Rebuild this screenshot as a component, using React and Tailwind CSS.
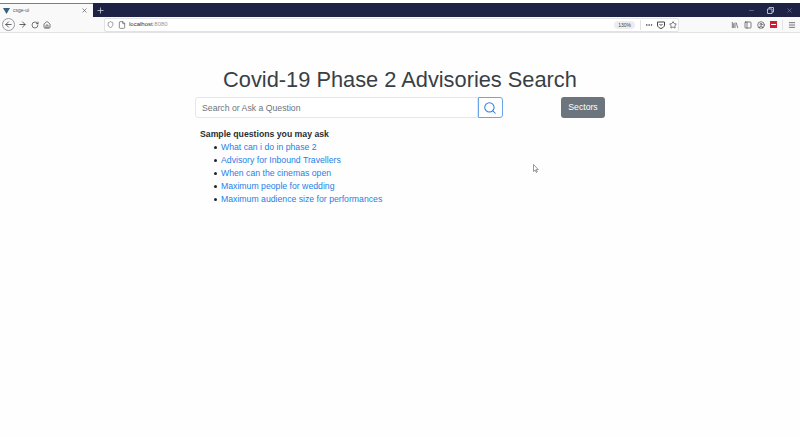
import { ArrowLeft, ArrowRight, RotateCw, Home, Shield, File, Star, Library, PanelLeft, CircleUser, Menu, X, Plus, Minus, Search, Ellipsis } from 'lucide-react';

const questions = [
  'What can i do in phase 2',
  'Advisory for Inbound Travellers',
  'When can the cinemas open',
  'Maximum people for wedding',
  'Maximum audience size for performances',
];

export default function App() {
  return (
    <div className="w-[800px] h-[437px] overflow-hidden bg-[#fefefe] relative font-['Liberation_Sans',sans-serif]">
      <div className="h-[3px] bg-white" />
      <div className="h-[14px] bg-[#1e2245] flex items-stretch">
        <div className="w-[93px] bg-[#f9f9fa] border-t border-[#3b8fe0] flex items-center pl-[3px] pr-[5px] gap-[3px]">
          <svg width="7" height="7" viewBox="0 0 8 8"><path d="M0 1h8L4 8z" fill="#35607f" /></svg>
          <span className="text-[5px] text-[#555] flex-1">csge-ui</span>
          <X size={7} color="#444" />
        </div>
        <div className="w-[14px] flex items-center justify-center">
          <Plus size={9} color="#d8d8e0" />
        </div>
        <div className="flex-1" />
        <div className="flex items-center gap-[12px] pr-[7px]">
          <Minus size={7} color="#8d8fa3" />
          <svg width="7" height="7" viewBox="0 0 7 7" fill="none" stroke="#b5b6c4"><path d="M.5 2h4.500v4.500H.5zM2 2V.5h4.500V5H5" /></svg>
          <X size={7} color="#8d8fa3" />
        </div>
      </div>
      <div className="h-[16px] bg-[#f9f9fa] border-b border-[#e4e4e6] flex items-center pl-[2px] pr-[4px]">
        <div className="w-[13px] h-[13px] rounded-full border border-[#9a9a9e] flex items-center justify-center">
          <ArrowLeft size={9} color="#333" />
        </div>
        <div className="flex items-center gap-[4px] ml-[3px]">
          <ArrowRight size={9} color="#333" />
          <RotateCw size={8} color="#333" />
          <Home size={8} color="#333" />
        </div>
        <div className="ml-[53px] w-[575px] h-[14px] bg-white border border-[#e2e2e4] rounded-[2px] flex items-center pl-[2px] pr-[1px]">
          <Shield size={7} color="#555" />
          <File size={8} color="#555" className="ml-[4px]" />
          <span className="text-[6px] text-[#333] ml-[3px] flex-1">localhost<span className="text-[#999]">:8080</span></span>
          <span className="text-[5px] text-[#444] bg-[#ededf0] rounded-full px-[4px] h-[8px] leading-[8px]">130%</span>
          <div className="w-px h-[10px] bg-[#e2e2e4] ml-[5px]" />
          <Ellipsis size={8} color="#333" className="ml-[4px]" />
          <svg width="8" height="8" viewBox="0 0 8 8" fill="none" stroke="#444" className="ml-[4px]"><path d="M.5 1h7v3c0 2-2 3-3.500 3.500C2.500 7 .5 6 .5 4z" /><path d="M2.500 3l1.500 1.500L5.500 3" /></svg>
          <Star size={8} color="#333" className="ml-[4px]" />
        </div>
        <div className="flex-1" />
        <div className="flex items-center gap-[5px]">
          <Library size={8} color="#444" />
          <PanelLeft size={8} color="#444" />
          <CircleUser size={8} color="#444" />
          <div className="w-[7px] h-[7px] bg-[#cc1f33] flex items-center justify-center">
            <div className="w-[5px] h-px bg-white" />
          </div>
          <div className="w-px h-[10px] bg-[#e2e2e4]" />
          <Menu size={8} color="#333" />
        </div>
      </div>

      <div className="flex flex-col items-center pt-[33px]">
        <h1 className="text-[21.8px] leading-[28px] text-[#3a3f45] whitespace-nowrap">Covid-19 Phase 2 Advisories Search</h1>
        <div className="w-[410px] mt-[3px] flex items-center">
          <input
            readOnly
            placeholder="Search or Ask a Question"
            className="w-[283px] h-[21px] bg-white border border-[#e4e7ea] rounded-l-[3px] px-[6px] text-[8.7px] placeholder:text-[#6c757d] outline-none"
          />
          <button className="w-[25px] h-[21px] bg-white border border-[#6aa5ea] rounded-r-[3px] flex items-center justify-center pr-[1px]">
            <Search size={14} color="#2b7de0" strokeWidth={1.75} />
          </button>
          <div className="flex-1" />
          <button className="w-[44px] h-[21px] bg-[#6c757d] rounded-[3px] text-white text-[8.7px]">Sectors</button>
        </div>
        <div className="w-[410px] mt-[10px] pl-[5px]">
          <div className="text-[8.7px] leading-[13px] font-bold text-[#2a2e33]">Sample questions you may ask</div>
          <ul className="pl-[14px] text-[8.7px] leading-[13px]">
            {questions.map((q) => (
              <li key={q} className="flex items-center gap-[4px]">
                <span className="w-[3px] h-[3px] rounded-full bg-[#212529]" />
                <a href="#" className="text-[#1f7fe8]">{q}</a>
              </li>
            ))}
          </ul>
        </div>
      </div>

      <svg className="absolute left-[533px] top-[164px]" width="6" height="9" viewBox="0 0 6 9">
        <path d="M.5.500v7l1.600-1.500 1.200 2.500 1-.5-1.200-2.400h2.200z" fill="#fff" stroke="#555" strokeWidth=".6" />
      </svg>
    </div>
  );
}
